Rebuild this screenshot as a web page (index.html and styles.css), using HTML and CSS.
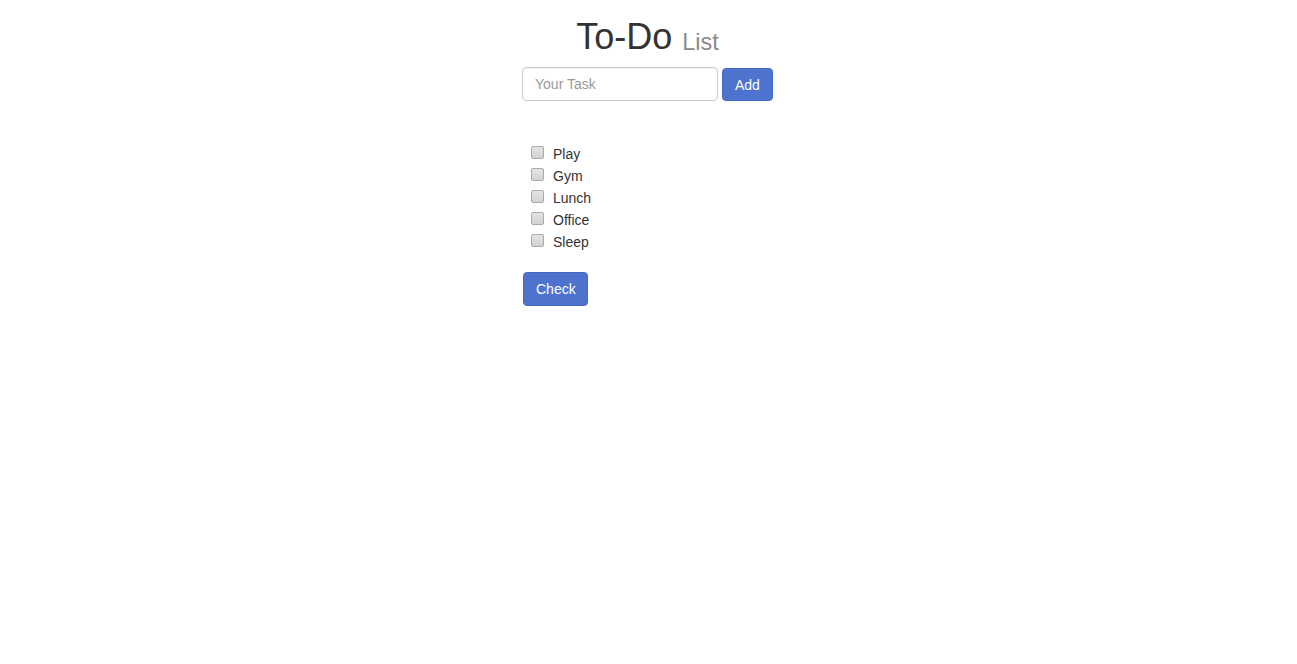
FILE: index.html
```html
<!DOCTYPE html>
<html>
<head>
<meta charset="utf-8">
<title>To-Do List</title>
<link rel="stylesheet" href="styles.css">
</head>
<body>
<div class="app">
  <h1 class="title">To-Do <small class="sub">List</small></h1>
  <form class="add-form">
    <input class="task-input" type="text" placeholder="Your Task">
    <button class="btn add-btn" type="button">Add</button>
  </form>
  <div class="list-wrap">
    <ul class="tasks">
      <li class="task"><input class="box" type="checkbox"><span class="label">Play</span></li>
      <li class="task"><input class="box" type="checkbox"><span class="label">Gym</span></li>
      <li class="task"><input class="box" type="checkbox"><span class="label">Lunch</span></li>
      <li class="task"><input class="box" type="checkbox"><span class="label">Office</span></li>
      <li class="task"><input class="box" type="checkbox"><span class="label">Sleep</span></li>
    </ul>
    <button class="btn check-btn" type="button">Check</button>
  </div>
</div>
</body>
</html>
```
FILE: styles.css
```css
html, body {
  margin: 0;
  padding: 0;
  background: #fff;
}
body {
  font-family: "Liberation Sans", Arial, Helvetica, sans-serif;
  font-size: 14px;
  line-height: 1.42857;
  color: #333;
}
.app {
  width: 253px;
  margin: 0 auto;
  padding-top: 17px;
  display: flex;
  flex-direction: column;
  align-items: flex-start;
}
.title {
  align-self: stretch;
  margin: 0 0 10px;
  padding-right: 2px;
  font-size: 36px;
  font-weight: 500;
  line-height: 1.1;
  color: #333;
  text-align: center;
  white-space: nowrap;
}
.sub {
  font-size: 65%;
  font-weight: 400;
  color: #8a8a8a;
  position: relative;
  top: 1px;
}
.add-form {
  display: flex;
  align-items: flex-start;
  gap: 4px;
  margin: 0;
}
.task-input {
  box-sizing: border-box;
  width: 196px;
  height: 34px;
  padding: 6px 12px;
  font-family: inherit;
  font-size: 14px;
  color: #555;
  border: 1px solid #ccc;
  border-radius: 4px;
  box-shadow: inset 0 1px 1px rgba(0,0,0,.075);
  outline: none;
}
.task-input::placeholder {
  color: #999;
}
.btn {
  box-sizing: border-box;
  height: 34px;
  padding: 6px 11px 6px 12px;
  font-family: inherit;
  font-size: 14px;
  line-height: 20px;
  color: #fff;
  background: #4e73cf;
  border: 1px solid #4568c0;
  border-radius: 4px;
  cursor: pointer;
}
.add-btn {
  margin-top: 1px;
  height: 33px;
  padding: 6px 12px 5px;
}
.list-wrap {
  align-self: stretch;
  margin-top: 42px;
  display: flex;
  flex-direction: column;
  align-items: flex-start;
}
.tasks {
  list-style: none;
  margin: 0 0 19px;
  padding: 1px 0 0 9px;
}
.task {
  display: flex;
  align-items: center;
  height: 22px;
}
.box {
  appearance: none;
  -webkit-appearance: none;
  box-sizing: border-box;
  width: 13px;
  height: 13px;
  margin: 0 9px 0 0;
  position: relative;
  top: -2px;
  border: 1px solid #a9a9a9;
  border-radius: 2px;
  background: linear-gradient(#e4e4e4, #d2d2d2);
}
.label {
  font-size: 14px;
  color: #333;
}
.check-btn {
  margin-left: 1px;
  margin-top: -1px;
}
```
